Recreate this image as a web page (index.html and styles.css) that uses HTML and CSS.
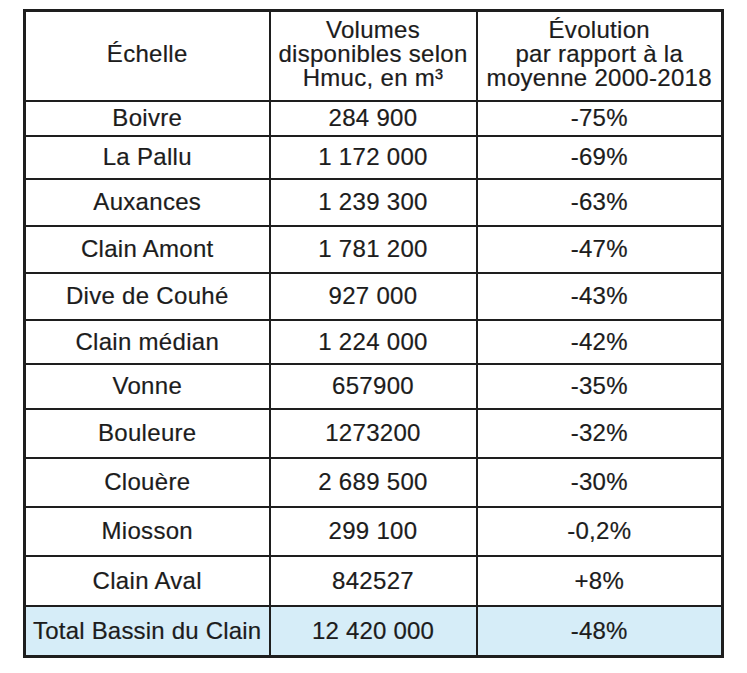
FILE: index.html
```html
<!DOCTYPE html>
<html lang="fr">
<head>
<meta charset="utf-8">
<title>Volumes disponibles</title>
<link rel="stylesheet" href="styles.css">
</head>
<body>
<table class="tbl">
  <colgroup>
    <col class="c1"><col class="c2"><col class="c3">
  </colgroup>
  <thead>
    <tr class="h90">
      <th>Échelle</th>
      <th>Volumes<br>disponibles selon<br>Hmuc, en m³</th>
      <th>Évolution<br>par rapport à la<br>moyenne 2000-2018</th>
    </tr>
  </thead>
  <tbody>
    <tr class="h35"><td>Boivre</td><td>284 900</td><td>-75%</td></tr>
    <tr class="h43"><td>La Pallu</td><td>1 172 000</td><td>-69%</td></tr>
    <tr class="h47"><td>Auxances</td><td>1 239 300</td><td>-63%</td></tr>
    <tr class="h47"><td>Clain Amont</td><td>1 781 200</td><td>-47%</td></tr>
    <tr class="h47"><td>Dive de Couhé</td><td>927 000</td><td>-43%</td></tr>
    <tr class="h44"><td>Clain médian</td><td>1 224 000</td><td>-42%</td></tr>
    <tr class="h45"><td>Vonne</td><td>657900</td><td>-35%</td></tr>
    <tr class="h49"><td>Bouleure</td><td>1273200</td><td>-32%</td></tr>
    <tr class="h49"><td>Clouère</td><td>2 689 500</td><td>-30%</td></tr>
    <tr class="h49"><td>Miosson</td><td>299 100</td><td>-0,2%</td></tr>
    <tr class="h50"><td>Clain Aval</td><td>842527</td><td>+8%</td></tr>
    <tr class="h51 total"><td>Total Bassin du Clain</td><td>12 420 000</td><td>-48%</td></tr>
  </tbody>
</table>
</body>
</html>
```
FILE: styles.css
```css
html, body {
  margin: 0;
  padding: 0;
  background: #ffffff;
}

body {
  padding: 9px 0 0 23px;
  font-family: "Liberation Sans", Arial, Helvetica, sans-serif;
  color: #1c1c1c;
}

.tbl {
  border-collapse: collapse;
  table-layout: fixed;
  width: 698px;
  border: 3px solid #1e1e1e;
}

.c1 { width: 245px; }
.c2 { width: 207px; }
.c3 { width: 246px; }

.tbl th,
.tbl td {
  border: 2px solid #1e1e1e;
  padding: 0;
  text-align: center;
  vertical-align: middle;
  font-size: 24px;
  font-weight: normal;
  line-height: 24px;
  letter-spacing: 0.3px;
  white-space: nowrap;
  -webkit-text-stroke: 0.2px #1c1c1c;
}

.tbl th {
  padding-bottom: 4px;
}

.total td {
  background: #d6edf8;
  letter-spacing: 0.2px;
}

.h90 { height: 90px; }
.h35 { height: 35px; }
.h43 { height: 43px; }
.h44 { height: 44px; }
.h45 { height: 45px; }
.h47 { height: 47px; }
.h49 { height: 49px; }
.h50 { height: 50px; }
.h51 { height: 51px; }
```
